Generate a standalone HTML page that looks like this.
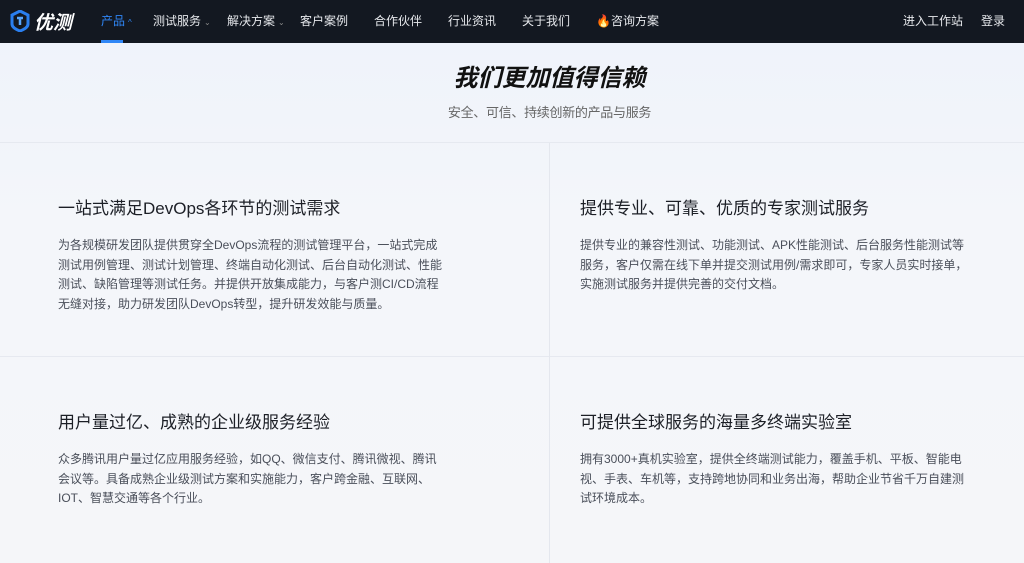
<!DOCTYPE html>
<html><head><meta charset="utf-8"><style>
*{margin:0;padding:0;box-sizing:border-box}
body{width:1024px;height:563px;overflow:hidden;font-family:"Liberation Sans","Noto Sans CJK SC",sans-serif;background:linear-gradient(180deg,#eef2fb 0%,#f4f6fa 40%,#f5f6f9 100%);position:relative}
.nav{position:absolute;top:0;left:0;width:1024px;height:43px;background:#131821;color:#e6e8ec;font-size:12px}
.nav span{position:absolute;top:12px;white-space:nowrap}
.caret{font-size:8px;color:#888;margin-left:3px}
.t{position:absolute;left:0;width:1099px;text-align:center}
.cell{position:absolute}
.cell h3{font-size:17px;font-weight:normal;color:#1c1f26;position:absolute;top:0;white-space:nowrap}
.cell p{font-size:12px;line-height:19.5px;color:#4a4f5a;position:absolute;top:42px;width:388px}
.vl{position:absolute;left:549px;top:143px;width:1px;height:420px;background:#e4e7ee}
.hl{position:absolute;left:0;width:1024px;height:1px;background:#e6e9f0}
</style></head><body>
<div class="nav">
<svg style="position:absolute;left:10px;top:10px" width="20" height="22" viewBox="0 0 20 22"><path d="M10 1 L18 5 V14 Q18 18 10 21 Q2 18 2 14 V5 Z" fill="none" stroke="#2a7ff0" stroke-width="3"/><path d="M7 8 H13 M10 8 V15" stroke="#5aa8ff" stroke-width="2.5"/></svg>
<span style="left:34px;top:8px;font-size:19px;font-weight:bold;font-style:italic;color:#fff">优测</span>
<span style="left:101px;color:#2f86f6">产品<span class="caret" style="position:static;color:#2f86f6">^</span></span>
<div style="position:absolute;left:101px;top:40px;width:22px;height:3px;background:#2f86f6"></div>
<span style="left:153px">测试服务<span class="caret" style="position:static">⌄</span></span>
<span style="left:227px">解决方案<span class="caret" style="position:static">⌄</span></span>
<span style="left:300px">客户案例</span>
<span style="left:374px">合作伙伴</span>
<span style="left:448px">行业资讯</span>
<span style="left:522px">关于我们</span>
<span style="left:596px"><span style="position:static;color:#f5a623">🔥</span>咨询方案</span>
<span style="left:903px">进入工作站</span>
<span style="left:981px">登录</span>
</div>
<div class="t" style="top:58px;left:0;width:1099px;font-size:24px;font-weight:bold;font-style:italic;color:#111">我们更加值得信赖</div>
<div class="t" style="top:102px;font-size:13px;color:#666;letter-spacing:-0.3px">安全、可信、持续创新的产品与服务</div>
<div class="hl" style="top:142px"></div>
<div class="hl" style="top:356px"></div>
<div class="vl"></div>
<div class="cell" style="left:58px;top:194px"><h3>一站式满足DevOps各环节的测试需求</h3><p>为各规模研发团队提供贯穿全DevOps流程的测试管理平台，一站式完成测试用例管理、测试计划管理、终端自动化测试、后台自动化测试、性能测试、缺陷管理等测试任务。并提供开放集成能力，与客户测CI/CD流程无缝对接，助力研发团队DevOps转型，提升研发效能与质量。</p></div>
<div class="cell" style="left:580px;top:194px"><h3>提供专业、可靠、优质的专家测试服务</h3><p>提供专业的兼容性测试、功能测试、APK性能测试、后台服务性能测试等服务，客户仅需在线下单并提交测试用例/需求即可，专家人员实时接单，实施测试服务并提供完善的交付文档。</p></div>
<div class="cell" style="left:58px;top:408px"><h3>用户量过亿、成熟的企业级服务经验</h3><p>众多腾讯用户量过亿应用服务经验，如QQ、微信支付、腾讯微视、腾讯会议等。具备成熟企业级测试方案和实施能力，客户跨金融、互联网、IOT、智慧交通等各个行业。</p></div>
<div class="cell" style="left:580px;top:408px"><h3>可提供全球服务的海量多终端实验室</h3><p>拥有3000+真机实验室，提供全终端测试能力，覆盖手机、平板、智能电视、手表、车机等，支持跨地协同和业务出海，帮助企业节省千万自建测试环境成本。</p></div>
</body></html>
